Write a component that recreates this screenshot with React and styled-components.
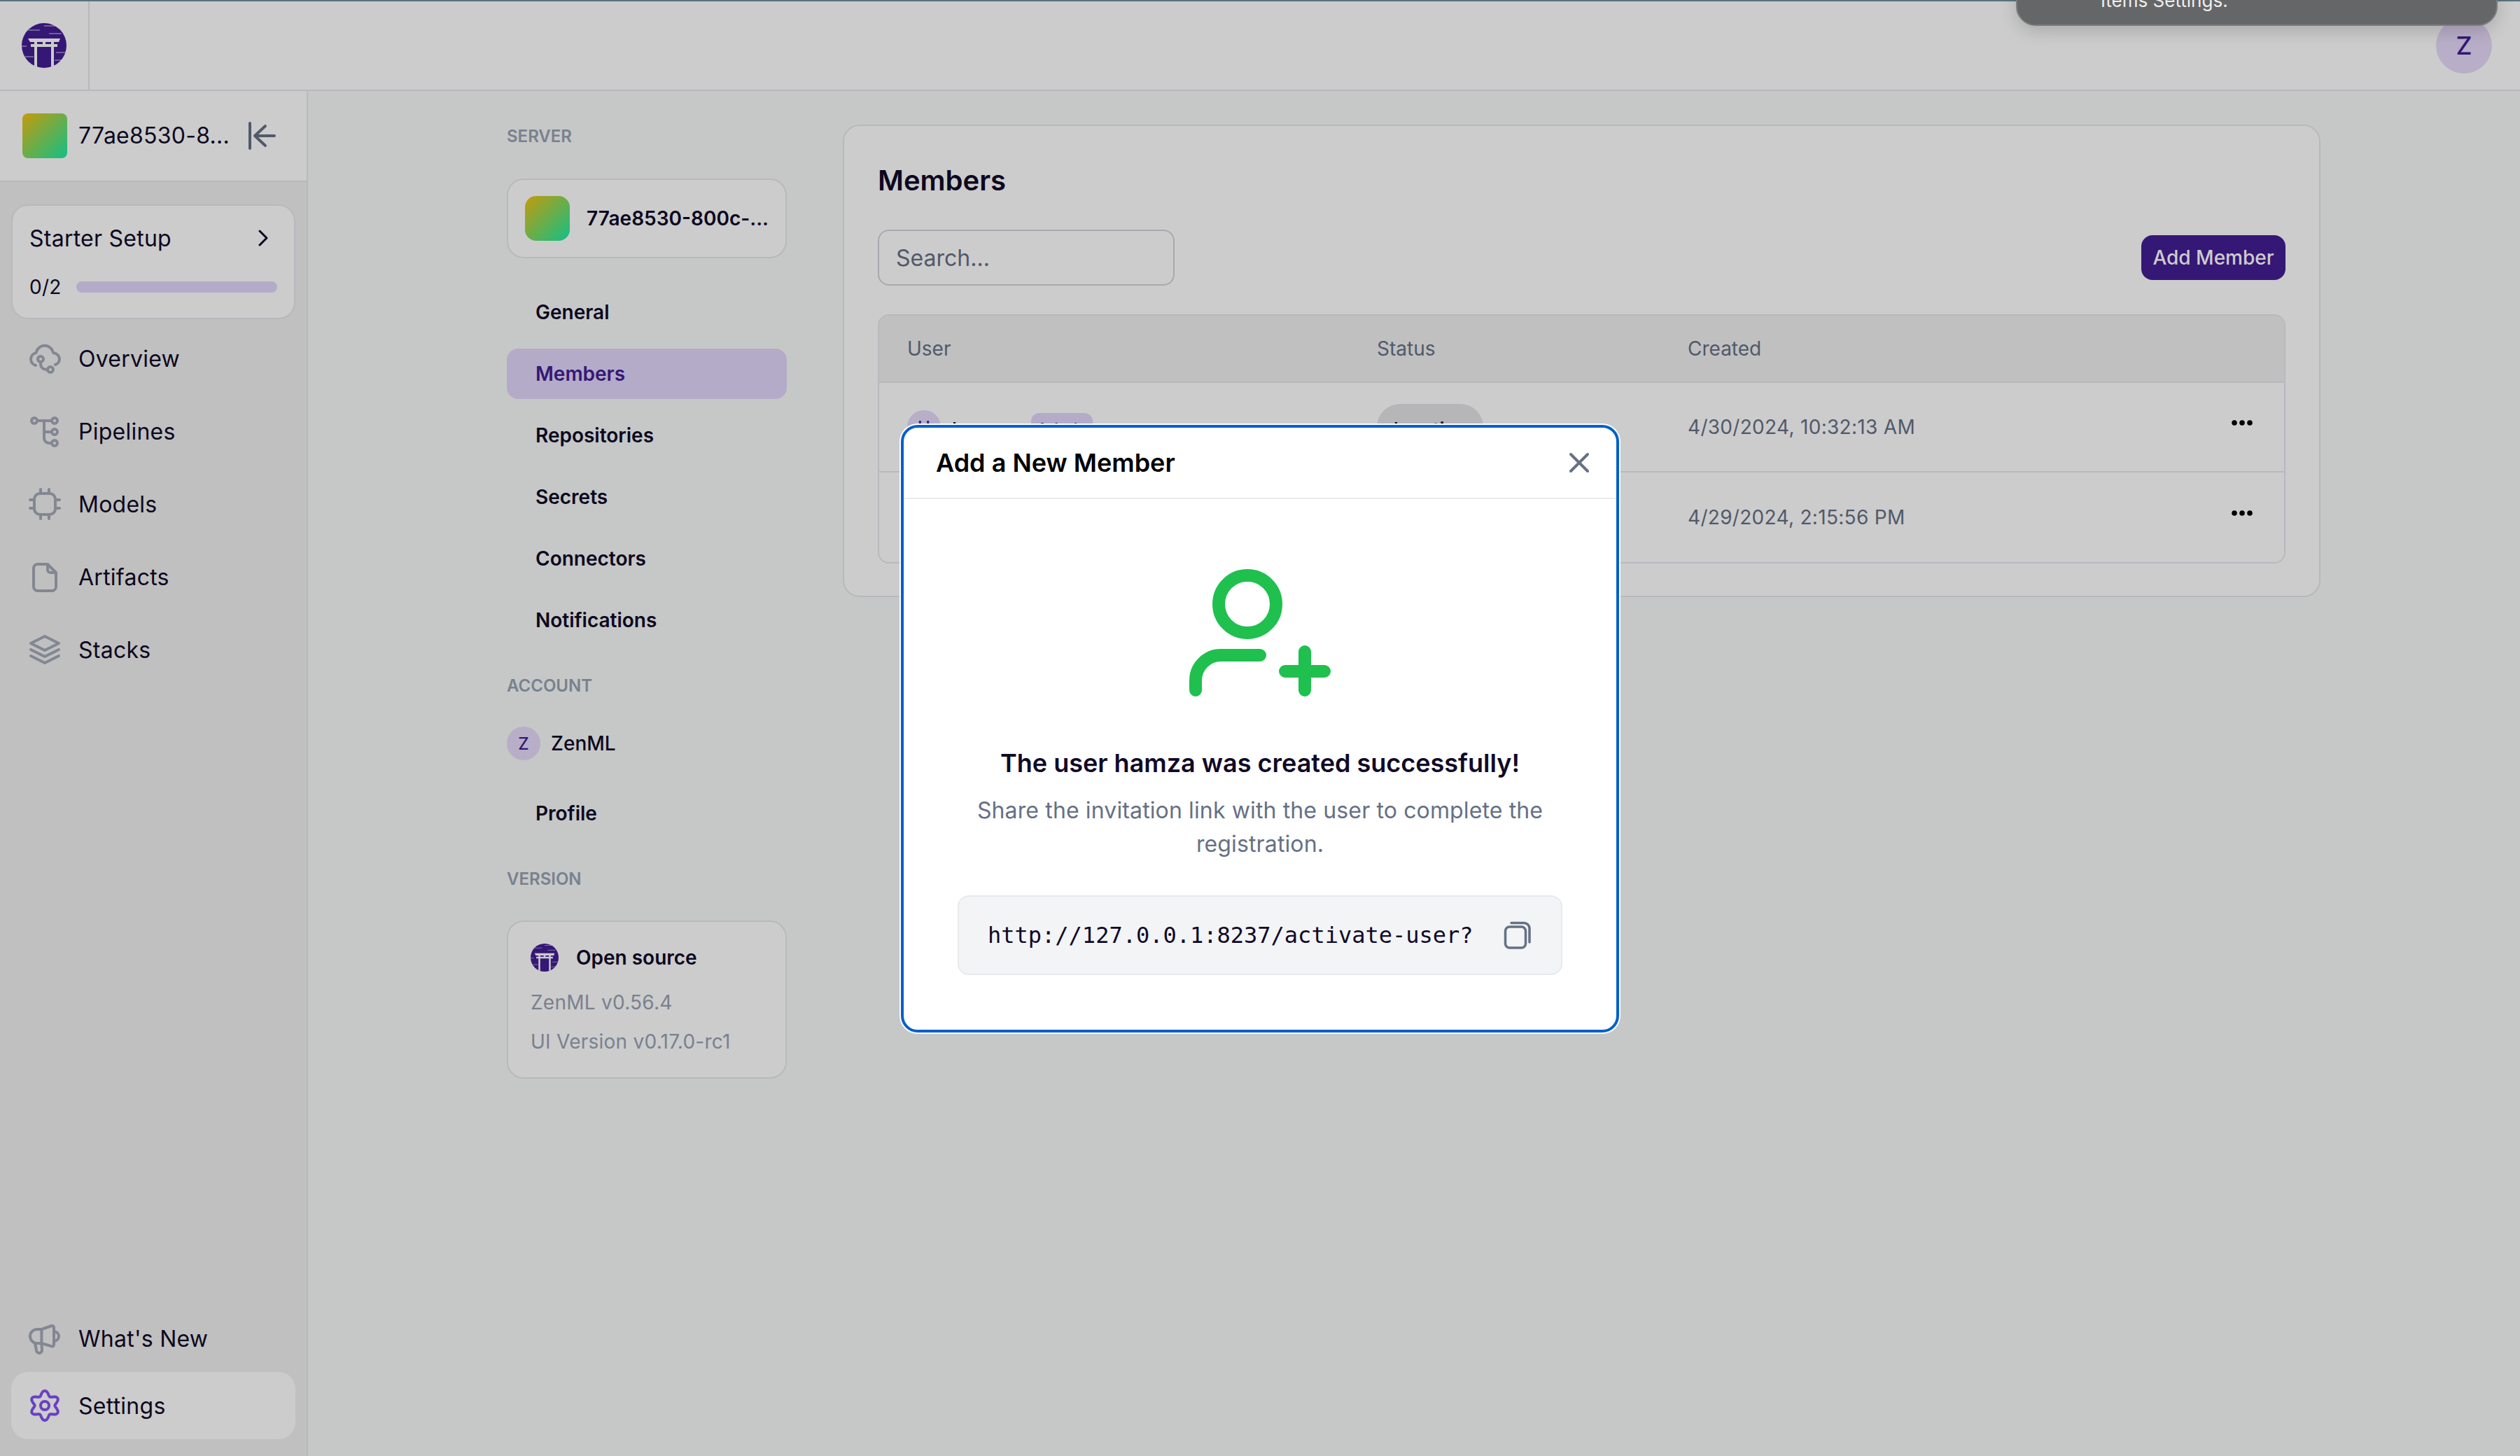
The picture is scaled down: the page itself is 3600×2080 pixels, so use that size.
import React from "react";
import styled, { createGlobalStyle } from "styled-components";

const GlobalStyle = createGlobalStyle`
  * { box-sizing: border-box; }
  html, body { margin: 0; padding: 0; background: #f8faf9; }
  body { font-family: Inter, "Liberation Sans", sans-serif; color: #100a28; }
`;

const colors = {
  ink: "#100a28",
  gray: "#667085",
  muted: "#98a2b3",
  icon: "#a4a9b7",
  line: "#e7e7ee",
  primary: "#431d93",
  tint: "#e2d6fc",
};

const Page = styled.div`
  position: relative;
  width: 3600px;
  height: 2080px;
  display: flex;
  flex-direction: column;
  overflow: hidden;
`;

const TopStrip = styled.div`
  height: 2px;
  flex: none;
  background: #74909e;
`;

const TopBar = styled.header`
  height: 128px;
  flex: none;
  display: flex;
  align-items: center;
  justify-content: space-between;
  padding-right: 40px;
  background: #fff;
  border-bottom: 2px solid ${colors.line};
`;

const LogoCell = styled.div`
  width: 128px;
  height: 100%;
  display: flex;
  align-items: center;
  justify-content: center;
  border-right: 2px solid ${colors.line};
`;

const Avatar = styled.div`
  width: ${(p) => p.$size}px;
  height: ${(p) => p.$size}px;
  flex: none;
  display: flex;
  align-items: center;
  justify-content: center;
  border-radius: 50%;
  background: #e6dafa;
  color: ${colors.primary};
  font-size: ${(p) => p.$font}px;
  font-weight: 500;
`;

const Body = styled.div`
  flex: 1;
  display: flex;
  min-height: 0;
`;

const Sidebar = styled.aside`
  width: 440px;
  flex: none;
  display: flex;
  flex-direction: column;
  background: #f1f1f1;
  border-right: 2px solid ${colors.line};
  letter-spacing: 0.25px;
`;

const WorkspaceBar = styled.div`
  height: 130px;
  flex: none;
  display: flex;
  align-items: center;
  padding: 0 44px 0 32px;
  background: #fff;
  border-bottom: 2px solid ${colors.line};
`;

const GradientTile = styled.div`
  width: 64px;
  height: 64px;
  flex: none;
  border-radius: ${(p) => p.$radius}px;
  background: linear-gradient(135deg, #f6c20f, #16f0a8);
`;

const WorkspaceName = styled.span`
  flex: 1;
  margin-left: 16px;
  font-size: 32px;
  line-height: 48px;
  white-space: nowrap;
`;

const SideNav = styled.nav`
  flex: 1;
  display: flex;
  flex-direction: column;
  gap: 8px;
  padding: 32px 16px 24px;
`;

const StarterCard = styled.div`
  height: 164px;
  flex: none;
  padding: 24px 32px 0 24px;
  background: #fff;
  border: 2px solid ${colors.line};
  border-radius: 24px;
`;

const StarterHead = styled.div`
  height: 44px;
  display: flex;
  align-items: center;
  justify-content: space-between;
  font-size: 32px;
`;

const StarterProgress = styled.div`
  margin: 28px -8px 0 0;
  display: flex;
  align-items: center;
  gap: 21px;
  font-size: 28px;
  line-height: 40px;
`;

const ProgressTrack = styled.div`
  flex: 1;
  height: 16px;
  border-radius: 8px;
  background: ${colors.tint};
`;

const SideItem = styled.a`
  height: 96px;
  flex: none;
  display: flex;
  align-items: center;
  gap: 24px;
  padding-left: 24px;
  border-radius: 24px;
  font-size: 32px;
  background: ${(p) => (p.$active ? "#fff" : "transparent")};
  margin-top: ${(p) => (p.$pushed ? "auto" : "0")};
  margin-bottom: ${(p) => (p.$pushed ? "-8px" : "0")};
`;

const Main = styled.main`
  flex: 1;
  display: flex;
  align-items: flex-start;
  gap: 80px;
  padding: 48px 285px 0 284px;
`;

const SettingsNav = styled.div`
  width: 400px;
  flex: none;
  display: flex;
  flex-direction: column;
`;

const SectionLabel = styled.div`
  height: 32px;
  margin-top: ${(p) => p.$top || 0}px;
  font-size: 24px;
  line-height: 34px;
  font-weight: 600;
  color: ${colors.muted};
`;

const ServerCard = styled.div`
  height: 114px;
  margin: 45px 0 41px;
  display: flex;
  align-items: center;
  gap: 24px;
  padding: 0 24px;
  background: #fff;
  border: 2px solid ${colors.line};
  border-radius: 24px;
  font-size: 28px;
  font-weight: 600;
  white-space: nowrap;
`;

const SettingsList = styled.div`
  display: flex;
  flex-direction: column;
  gap: 16px;
`;

const SettingsLink = styled.a`
  height: 72px;
  display: flex;
  align-items: center;
  padding-left: 41px;
  border-radius: 16px;
  font-size: 28px;
  font-weight: 600;
  color: ${(p) => (p.$active ? colors.primary : colors.ink)};
  background: ${(p) => (p.$active ? colors.tint : "transparent")};
`;

const AccountRow = styled.div`
  margin: 43px 0 40px;
  display: flex;
  align-items: center;
  gap: 15px;
  font-size: 28px;
  font-weight: 500;
`;

const VersionCard = styled.div`
  height: 226px;
  margin-top: 44px;
  padding: 31px 32px 0;
  background: #fff;
  border: 2px solid ${colors.line};
  border-radius: 24px;
`;

const VersionHead = styled.div`
  display: flex;
  align-items: center;
  gap: 25px;
  margin-bottom: 16px;
  font-size: 28px;
  font-weight: 600;
`;

const VersionLine = styled.div`
  font-size: 28px;
  line-height: 56px;
  letter-spacing: 0.25px;
  color: ${colors.muted};
`;

const MembersCard = styled.section`
  flex: 1;
  height: 675px;
  padding: 50px 48px 0;
  background: #fff;
  border: 2px solid ${colors.line};
  border-radius: 24px;
`;

const Title = styled.h1`
  margin: 0 0 42px;
  font-size: 40px;
  line-height: 56px;
  font-weight: 600;
`;

const Toolbar = styled.div`
  display: flex;
  align-items: center;
  justify-content: space-between;
  margin-bottom: 41px;
`;

const SearchBox = styled.input`
  width: 424px;
  height: 80px;
  padding: 0 24px;
  background: #fff;
  border: 2px solid #d0d5dd;
  border-radius: 16px;
  font-family: inherit;
  font-size: 32px;
  &::placeholder {
    color: ${colors.gray};
    opacity: 1;
  }
`;

const PrimaryButton = styled.button`
  width: 206px;
  height: 64px;
  padding: 0;
  border: none;
  border-radius: 16px;
  background: ${colors.primary};
  color: #fff;
  font-family: inherit;
  font-size: 28px;
  font-weight: 500;
`;

const Table = styled.div`
  border: 2px solid ${colors.line};
  border-radius: 16px;
  overflow: hidden;
`;

const Row = styled.div`
  display: grid;
  grid-template-columns: 671px 444px 1fr 75px;
  align-items: center;
  height: ${(p) => (p.$head ? 96 : 128)}px;
  padding-left: 40px;
  background: ${(p) => (p.$head ? "#f1f1f1" : "#fff")};
  border-bottom: ${(p) => (p.$last ? "none" : `2px solid ${colors.line}`)};
  font-size: 28px;
  color: ${colors.gray};
`;

const CreatedCell = styled.span`
  letter-spacing: 0.3px;
`;

const UserCell = styled.div`
  display: flex;
  align-items: center;
  gap: 16px;
  color: ${colors.ink};
  font-weight: 500;
`;

const UserName = styled.span`
  padding-top: 8px;
`;

const RoleBadge = styled.span`
  width: 88px;
  height: 40px;
  margin-left: 8px;
  padding-top: 6px;
  display: flex;
  align-items: center;
  justify-content: center;
  border-radius: 12px;
  background: ${colors.tint};
  color: ${colors.primary};
  font-size: 24px;
  font-weight: 500;
`;

const StatusPill = styled.span`
  width: 152px;
  height: 66px;
  padding-top: 8px;
  display: flex;
  align-items: center;
  justify-content: center;
  border-radius: 33px;
  background: #e4e4e8;
  color: ${colors.ink};
  font-size: 28px;
  font-weight: 500;
`;

const DotsButton = styled.div`
  display: flex;
  justify-content: flex-start;
  margin-top: -12px;
`;

const Overlay = styled.div`
  position: absolute;
  inset: 0;
  display: flex;
  align-items: center;
  justify-content: center;
  padding-top: 2px;
  background: rgba(0, 0, 0, 0.2);
`;

const Modal = styled.div`
  width: 1026px;
  height: 868px;
  display: flex;
  flex-direction: column;
  background: #fff;
  border: 4px solid #0060cc;
  border-radius: 24px;
  box-shadow: 0 0 0 2px #fff;
`;

const ModalHead = styled.div`
  height: 102px;
  flex: none;
  display: flex;
  align-items: center;
  justify-content: space-between;
  padding: 0 37px 0 46px;
  border-bottom: 2px solid #e9eaee;
`;

const ModalTitle = styled.h2`
  margin: 0;
  font-size: 36px;
  font-weight: 600;
  color: #000;
`;

const ModalBody = styled.div`
  flex: 1;
  display: flex;
  flex-direction: column;
  align-items: center;
  padding: 87px 77px 0;
  text-align: center;
`;

const SuccessText = styled.h3`
  margin: 62px 0 16px;
  font-size: 36px;
  line-height: 56px;
  font-weight: 600;
`;

const ShareText = styled.p`
  margin: 0 0 49px;
  font-size: 32px;
  line-height: 48px;
  letter-spacing: 0.13px;
  color: ${colors.gray};
`;

const LinkBox = styled.div`
  width: 864px;
  height: 114px;
  flex: none;
  display: flex;
  align-items: center;
  justify-content: space-between;
  padding: 0 42px 0 41px;
  background: #f3f4f6;
  border: 2px solid #e9eaee;
  border-radius: 16px;
`;

const LinkText = styled.code`
  font-family: "DejaVu Sans Mono", "Liberation Mono", monospace;
  font-size: 32px;
  color: ${colors.ink};
`;

const Toast = styled.div`
  position: absolute;
  top: -100px;
  left: 2880px;
  width: 688px;
  height: 137px;
  padding: 81px 0 0 119px;
  background: #656667;
  border: 2px solid #7b7c7d;
  border-radius: 28px;
  box-shadow: 0 8px 24px rgba(0, 0, 0, 0.16);
  color: #eee;
  font-size: 26px;
  line-height: 36px;
`;

const Icon = styled.svg`
  width: ${(p) => p.$size || 48}px;
  height: ${(p) => p.$size || 48}px;
  flex: none;
  fill: none;
  stroke: ${(p) => p.$color || colors.icon};
  stroke-width: ${(p) => p.$stroke || 2};
  stroke-linecap: round;
  stroke-linejoin: round;
`;

const gearPath =
  Array.from({ length: 73 }, (_, i) => {
    const a = (i / 72) * Math.PI * 2;
    const r = 8.9 + 1.7 * Math.cos(6 * a);
    return `${i ? "L" : "M"}${(12 + r * Math.sin(a)).toFixed(2)} ${(12 - r * Math.cos(a)).toFixed(2)}`;
  }).join(" ") + " Z";

const OverviewIcon = () => (
  <Icon viewBox="0 0 24 24">
    <path d="M5.5 17A5 5 0 0 1 2 12.5 4.8 4.8 0 0 1 5.8 8 6.2 6.2 0 0 1 18 8a4.8 4.8 0 0 1 4.5 4.5 4.5 4.5 0 0 1-3 4" />
    <circle cx="9" cy="12.5" r="2" />
    <circle cx="16" cy="20" r="2" />
    <path d="M9 14.5V16a4 4 0 0 0 4 4h1" />
  </Icon>
);

const PipelinesIcon = () => (
  <Icon viewBox="0 0 24 24">
    <circle cx="4.5" cy="4.5" r="2" />
    <circle cx="19" cy="4.5" r="2" />
    <circle cx="19" cy="12.5" r="2" />
    <circle cx="19" cy="20.5" r="2" />
    <path d="M6.5 4.5H17M11.5 4.5V17a3.5 3.5 0 0 0 3.5 3.5h2M11.5 12.5H17" />
  </Icon>
);

const ModelsIcon = () => (
  <Icon viewBox="0 0 24 24">
    <rect x="4.5" y="4.5" width="15" height="15" rx="4" />
    <path d="M9 1.5v3M15 1.5v3M9 19.5v3M15 19.5v3M1.5 9h3M1.5 15h3M19.5 9h3M19.5 15h3" />
  </Icon>
);

const ArtifactsIcon = () => (
  <Icon viewBox="0 0 24 24">
    <path d="M14 3H7a3 3 0 0 0-3 3v13a3 3 0 0 0 3 3h10a3 3 0 0 0 3-3V9z" />
    <path d="M14 3v4a2 2 0 0 0 2 2h4" />
  </Icon>
);

const StacksIcon = () => (
  <Icon viewBox="0 0 24 24">
    <path d="M12 2.5l10 5-10 5-10-5z" />
    <path d="M2 12l10 5 10-5M2 16.5l10 5 10-5" />
  </Icon>
);

const MegaphoneIcon = () => (
  <Icon viewBox="0 0 24 24">
    <path d="M9.7 5.5L17 3a1.2 1.2 0 0 1 1.5 1v12.5a1.2 1.2 0 0 1-1.5 1.2l-7.3-2.2H6.5a5 5 0 0 1 0-10z" />
    <path d="M9.7 5.5v10M5 15.5l1 5a2 2 0 0 0 4 0l-.3-5M18.5 7a3.5 3.5 0 0 1 0 7" />
  </Icon>
);

const SettingsIcon = () => (
  <Icon viewBox="0 0 24 24" $color="#8250f5">
    <path d={gearPath} />
    <circle cx="12" cy="12" r="3" />
  </Icon>
);

const CollapseIcon = () => (
  <Icon viewBox="0 0 40 40" $size={40} $color={colors.gray} $stroke={4}>
    <path d="M3 2v36M38 20H10M25 6L10 20l15 14" />
  </Icon>
);

const ChevronIcon = () => (
  <Icon viewBox="0 0 16 24" $size={24} $color={colors.ink} $stroke={3}>
    <path d="M3 2l10 10L3 22" />
  </Icon>
);

const CloseIcon = () => (
  <Icon viewBox="0 0 32 32" $size={32} $color={colors.gray} $stroke={4}>
    <path d="M4 4l24 24M28 4L4 28" />
  </Icon>
);

const CopyIcon = () => (
  <Icon viewBox="0 0 40 40" $size={40} $color={colors.gray} $stroke={3.5}>
    <rect x="2.5" y="8" width="29" height="30" rx="6" />
    <path d="M11 2.5h18a8 8 0 0 1 8 8V30" />
  </Icon>
);

const DotsIcon = () => (
  <svg width="30" height="8" viewBox="0 0 30 8" fill="#000">
    <circle cx="4" cy="4" r="3.8" />
    <circle cx="15" cy="4" r="3.8" />
    <circle cx="26" cy="4" r="3.8" />
  </svg>
);

const streaks = [
  [32, 4, 48],
  [9, 10, 26],
  [39, 15, 57],
  [0, 33, 7],
  [49, 42, 62],
  [5, 48, 17],
  [47, 53, 59],
];

const ZenLogo = ({ size }) => (
  <svg width={size} height={size} viewBox="0 0 64 64">
    <circle cx="32" cy="32" r="32" fill="#431d93" />
    {streaks.map(([x1, y, x2]) => (
      <path key={y} d={`M${x1} ${y}H${x2}`} stroke="#fff" strokeWidth="0.8" />
    ))}
    <path
      fill="#fff"
      d="M9 22h46l-2 5h-7v3h5v4H46v28h-4V34H22v28h-4V34H13v-4h5v-3h4v3h8v-3H12z M34 27v3h8v-3z"
      fillRule="evenodd"
    />
  </svg>
);

const navItems = [
  ["Overview", OverviewIcon],
  ["Pipelines", PipelinesIcon],
  ["Models", ModelsIcon],
  ["Artifacts", ArtifactsIcon],
  ["Stacks", StacksIcon],
];

const settingsLinks = ["General", "Members", "Repositories", "Secrets", "Connectors", "Notifications"];

const members = [
  { initial: "H", name: "hamza", admin: true, status: "Inactive", created: "4/30/2024, 10:32:13 AM" },
  { initial: "D", name: "default", admin: false, status: "Active", created: "4/29/2024, 2:15:56 PM" },
];

export default function App() {
  return (
    <Page>
      <GlobalStyle />
      <TopStrip />
      <TopBar>
        <LogoCell>
          <ZenLogo size={64} />
        </LogoCell>
        <Avatar $size={80} $font={36}>Z</Avatar>
      </TopBar>
      <Body>
        <Sidebar>
          <WorkspaceBar>
            <GradientTile $radius={8} />
            <WorkspaceName>77ae8530-8...</WorkspaceName>
            <CollapseIcon />
          </WorkspaceBar>
          <SideNav>
            <StarterCard>
              <StarterHead>
                Starter Setup
                <ChevronIcon />
              </StarterHead>
              <StarterProgress>
                0/2
                <ProgressTrack />
              </StarterProgress>
            </StarterCard>
            {navItems.map(([label, ItemIcon]) => (
              <SideItem key={label}>
                <ItemIcon />
                {label}
              </SideItem>
            ))}
            <SideItem $pushed>
              <MegaphoneIcon />
              What's New
            </SideItem>
            <SideItem $active>
              <SettingsIcon />
              Settings
            </SideItem>
          </SideNav>
        </Sidebar>
        <Main>
          <SettingsNav>
            <SectionLabel>SERVER</SectionLabel>
            <ServerCard>
              <GradientTile $radius={16} />
              77ae8530-800c-...
            </ServerCard>
            <SettingsList>
              {settingsLinks.map((label) => (
                <SettingsLink key={label} $active={label === "Members"}>
                  {label}
                </SettingsLink>
              ))}
            </SettingsList>
            <SectionLabel $top={41}>ACCOUNT</SectionLabel>
            <AccountRow>
              <Avatar $size={48} $font={24}>Z</Avatar>
              ZenML
            </AccountRow>
            <SettingsLink>Profile</SettingsLink>
            <SectionLabel $top={41}>VERSION</SectionLabel>
            <VersionCard>
              <VersionHead>
                <ZenLogo size={40} />
                Open source
              </VersionHead>
              <VersionLine>ZenML v0.56.4</VersionLine>
              <VersionLine>UI Version v0.17.0-rc1</VersionLine>
            </VersionCard>
          </SettingsNav>
          <MembersCard>
            <Title>Members</Title>
            <Toolbar>
              <SearchBox placeholder="Search..." readOnly />
              <PrimaryButton>Add Member</PrimaryButton>
            </Toolbar>
            <Table>
              <Row $head>
                <span>User</span>
                <span>Status</span>
                <span>Created</span>
              </Row>
              {members.map((m, i) => (
                <Row key={m.name} $last={i === members.length - 1}>
                  <UserCell>
                    <Avatar $size={48} $font={24}>{m.initial}</Avatar>
                    <UserName>{m.name}</UserName>
                    {m.admin && <RoleBadge>Admin</RoleBadge>}
                  </UserCell>
                  <div>
                    <StatusPill>{m.status}</StatusPill>
                  </div>
                  <CreatedCell>{m.created}</CreatedCell>
                  <DotsButton>
                    <DotsIcon />
                  </DotsButton>
                </Row>
              ))}
            </Table>
          </MembersCard>
        </Main>
      </Body>
      <Overlay>
        <Modal>
          <ModalHead>
            <ModalTitle>Add a New Member</ModalTitle>
            <CloseIcon />
          </ModalHead>
          <ModalBody>
            <svg width="220" height="200" viewBox="0 0 220 200" fill="none" stroke="#1fc04e" strokeWidth="18" strokeLinecap="round">
              <circle cx="92" cy="63" r="41" />
              <path d="M18 186v-14a36 36 0 0 1 36-36h56" />
              <path d="M174 131v55M146 159h56" />
            </svg>
            <SuccessText>The user hamza was created successfully!</SuccessText>
            <ShareText>Share the invitation link with the user to complete the registration.</ShareText>
            <LinkBox>
              <LinkText>http://127.0.0.1:8237/activate-user?</LinkText>
              <CopyIcon />
            </LinkBox>
          </ModalBody>
        </Modal>
      </Overlay>
      <Toast>Items Settings.</Toast>
    </Page>
  );
}
